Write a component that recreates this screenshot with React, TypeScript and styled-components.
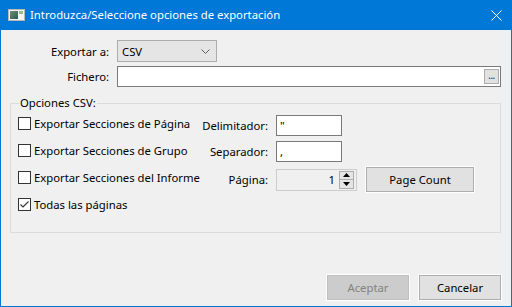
import React from 'react';
import styled, { createGlobalStyle } from 'styled-components';

const GlobalStyle = createGlobalStyle`
  html, body {
    margin: 0;
    padding: 0;
    background: #ffffff;
  }
  body {
    font-family: 'Noto Sans', 'Segoe UI', sans-serif;
    font-size: 11.3px;
    color: #000;
  }
`;

const Window = styled.div`
  width: 512px;
  height: 307px;
  box-sizing: border-box;
  border: 1px solid #0078d7;
  border-top: none;
  display: flex;
  flex-direction: column;
  background: #f0f0f0;
`;

const TitleBar = styled.div`
  height: 30px;
  flex: none;
  background: #0078d7;
  color: #fff;
  display: flex;
  align-items: center;
  padding: 0 10px 0 8px;
  gap: 5px;
  margin: 0 -1px;
`;

const TitleText = styled.span`
  flex: 1;
  line-height: 16px;
`;

const Body = styled.div`
  flex: 1;
  display: flex;
  flex-direction: column;
  padding: 10px 10px 6px 8px;
`;

const FormGrid = styled.div`
  display: grid;
  grid-template-columns: 100px 1fr;
  column-gap: 8px;
  row-gap: 4px;
  align-items: center;
`;

const Label = styled.label`
  text-align: right;
  white-space: nowrap;
`;

const Select = styled.div`
  width: 100px;
  height: 22px;
  box-sizing: border-box;
  background: #e5e5e5;
  border: 1px solid #adadad;
  display: flex;
  align-items: center;
  justify-content: space-between;
  padding: 0 6px 0 4px;
`;

const TextBox = styled.div<{ $w?: number; $h?: number; $disabled?: boolean }>`
  width: ${({ $w }) => ($w ? `${$w}px` : 'auto')};
  height: ${({ $h }) => $h ?? 21}px;
  box-sizing: border-box;
  background: ${({ $disabled }) => ($disabled ? '#f0f0f0' : '#fff')};
  border: 1px solid ${({ $disabled }) => ($disabled ? '#cccccc' : '#7a7a7a')};
  display: flex;
  align-items: center;
  padding: 0 2px 0 3px;
  line-height: 16px;
`;

const FileBox = styled(TextBox)`
  justify-content: flex-end;
  padding: 0 1px;
`;

const DotsButton = styled.div`
  width: 15px;
  height: 15px;
  box-sizing: border-box;
  background: #e1e1e1;
  border: 1px solid #adadad;
  font-size: 10px;
  line-height: 10px;
  text-align: center;
  letter-spacing: -0.5px;
  color: #301830;
`;

const Group = styled.fieldset`
  margin: 8px 0 0 1px;
  padding: 4px 7px 21px 7px;
  border: 1px solid #dcdcdc;
  min-width: 0;
`;

const Legend = styled.legend`
  padding: 0 1px;
  margin-left: 1px;
  line-height: 16px;
`;

const GroupContent = styled.div`
  display: flex;
  align-items: flex-start;
`;

const CheckColumn = styled.div`
  width: 170px;
  flex: none;
  display: flex;
  flex-direction: column;
  gap: 14px;
  padding-top: 2px;
`;

const FieldsGrid = styled.div`
  display: grid;
  grid-template-columns: 88px 90px 108px;
  grid-template-rows: 21px 21px 25px;
  row-gap: 5px;
  align-items: center;
`;

const CheckRow = styled.label`
  height: 13px;
  display: flex;
  align-items: center;
  gap: 3px;
  white-space: nowrap;
`;

const Box = styled.span`
  width: 13px;
  height: 13px;
  box-sizing: border-box;
  border: 1px solid #333;
  background: #fff;
  flex: none;
  display: flex;
  align-items: center;
  justify-content: center;
`;

const FieldLabel = styled.span`
  text-align: right;
  white-space: nowrap;
  padding-right: 8px;
`;

const Spin = styled(TextBox)`
  justify-content: flex-end;
  padding: 0 2px 0 3px;
  gap: 4px;
`;

const SpinButtons = styled.div`
  width: 15px;
  height: 18px;
  display: flex;
  flex-direction: column;
  border: 1px solid #acacac;
  box-sizing: border-box;
  background: #e5e5e5;
`;

const SpinHalf = styled.div<{ $top?: boolean }>`
  flex: 1;
  display: flex;
  align-items: center;
  justify-content: center;
  border-bottom: ${({ $top }) => ($top ? '1px solid #acacac' : 'none')};
`;

const Button = styled.div<{ $w: number; $disabled?: boolean }>`
  width: ${({ $w }) => $w}px;
  height: 25px;
  box-sizing: border-box;
  border: 1px solid ${({ $disabled }) => ($disabled ? '#bfbfbf' : '#adadad')};
  outline: 1px solid #fff;
  background: ${({ $disabled }) => ($disabled ? '#cccccc' : '#e1e1e1')};
  color: ${({ $disabled }) => ($disabled ? '#838383' : '#000')};
  display: flex;
  align-items: center;
  justify-content: center;
`;

const Footer = styled.div`
  margin-top: auto;
  display: flex;
  justify-content: flex-end;
  gap: 10px;
`;

const Check = ({ checked, children }: { checked?: boolean; children: React.ReactNode }) => (
  <CheckRow>
    <Box>
      {checked && (
        <svg width="11" height="11" viewBox="0 0 11 11">
          <path d="M1.5 5.5 L4 8 L9.5 2.5" fill="none" stroke="#333" strokeWidth="1.1" />
        </svg>
      )}
    </Box>
    {children}
  </CheckRow>
);

const App = () => (
  <>
    <GlobalStyle />
    <Window>
      <TitleBar>
        <svg width="17" height="13" viewBox="0 0 17 13">
          <rect x="0.5" y="0.5" width="16" height="11" fill="#f4f4f4" stroke="#b8b8b8" />
          <defs>
            <linearGradient id="pane" x1="0" y1="0" x2="1" y2="1">
              <stop offset="0" stopColor="#6d8f7a" />
              <stop offset="1" stopColor="#2f5a48" />
            </linearGradient>
          </defs>
          <rect x="2" y="2" width="8" height="8" fill="url(#pane)" />
          <rect x="11" y="2" width="4" height="3" fill="#8fbf8a" />
        </svg>
        <TitleText>Introduzca/Seleccione opciones de exportación</TitleText>
        <svg width="11" height="11" viewBox="0 0 11 11">
          <path d="M0.5 0.5 L10.5 10.5 M10.5 0.5 L0.5 10.5" stroke="#fff" strokeWidth="1" />
        </svg>
      </TitleBar>
      <Body>
        <FormGrid>
          <Label>Exportar a:</Label>
          <Select>
            <span>CSV</span>
            <svg width="9" height="5" viewBox="0 0 9 5">
              <path d="M0.5 0.5 L4.5 4.5 L8.5 0.5" fill="none" stroke="#606060" />
            </svg>
          </Select>
          <Label>Fichero:</Label>
          <FileBox>
            <DotsButton>...</DotsButton>
          </FileBox>
        </FormGrid>
        <Group>
          <Legend>Opciones CSV:</Legend>
          <GroupContent>
            <CheckColumn>
              <Check>Exportar Secciones de Página</Check>
              <Check>Exportar Secciones de Grupo</Check>
              <Check>Exportar Secciones del Informe</Check>
              <Check checked>Todas las páginas</Check>
            </CheckColumn>
            <FieldsGrid>
              <FieldLabel>Delimitador:</FieldLabel>
              <TextBox $w={66}>"</TextBox>
              <span />
              <FieldLabel>Separador:</FieldLabel>
              <TextBox $w={66}>,</TextBox>
              <span />
              <FieldLabel>Página:</FieldLabel>
              <Spin $w={81} $h={22} $disabled>
                <span>1</span>
                <SpinButtons>
                  <SpinHalf $top>
                    <svg width="7" height="4" viewBox="0 0 7 4">
                      <path d="M0 4 L3.5 0 L7 4 Z" fill="#000" />
                    </svg>
                  </SpinHalf>
                  <SpinHalf>
                    <svg width="7" height="4" viewBox="0 0 7 4">
                      <path d="M0 0 L3.5 4 L7 0 Z" fill="#000" />
                    </svg>
                  </SpinHalf>
                </SpinButtons>
              </Spin>
              <Button $w={108}>Page Count</Button>
            </FieldsGrid>
          </GroupContent>
        </Group>
        <Footer>
          <Button $w={82} $disabled>
            Aceptar
          </Button>
          <Button $w={82}>Cancelar</Button>
        </Footer>
      </Body>
    </Window>
  </>
);

export default App;
